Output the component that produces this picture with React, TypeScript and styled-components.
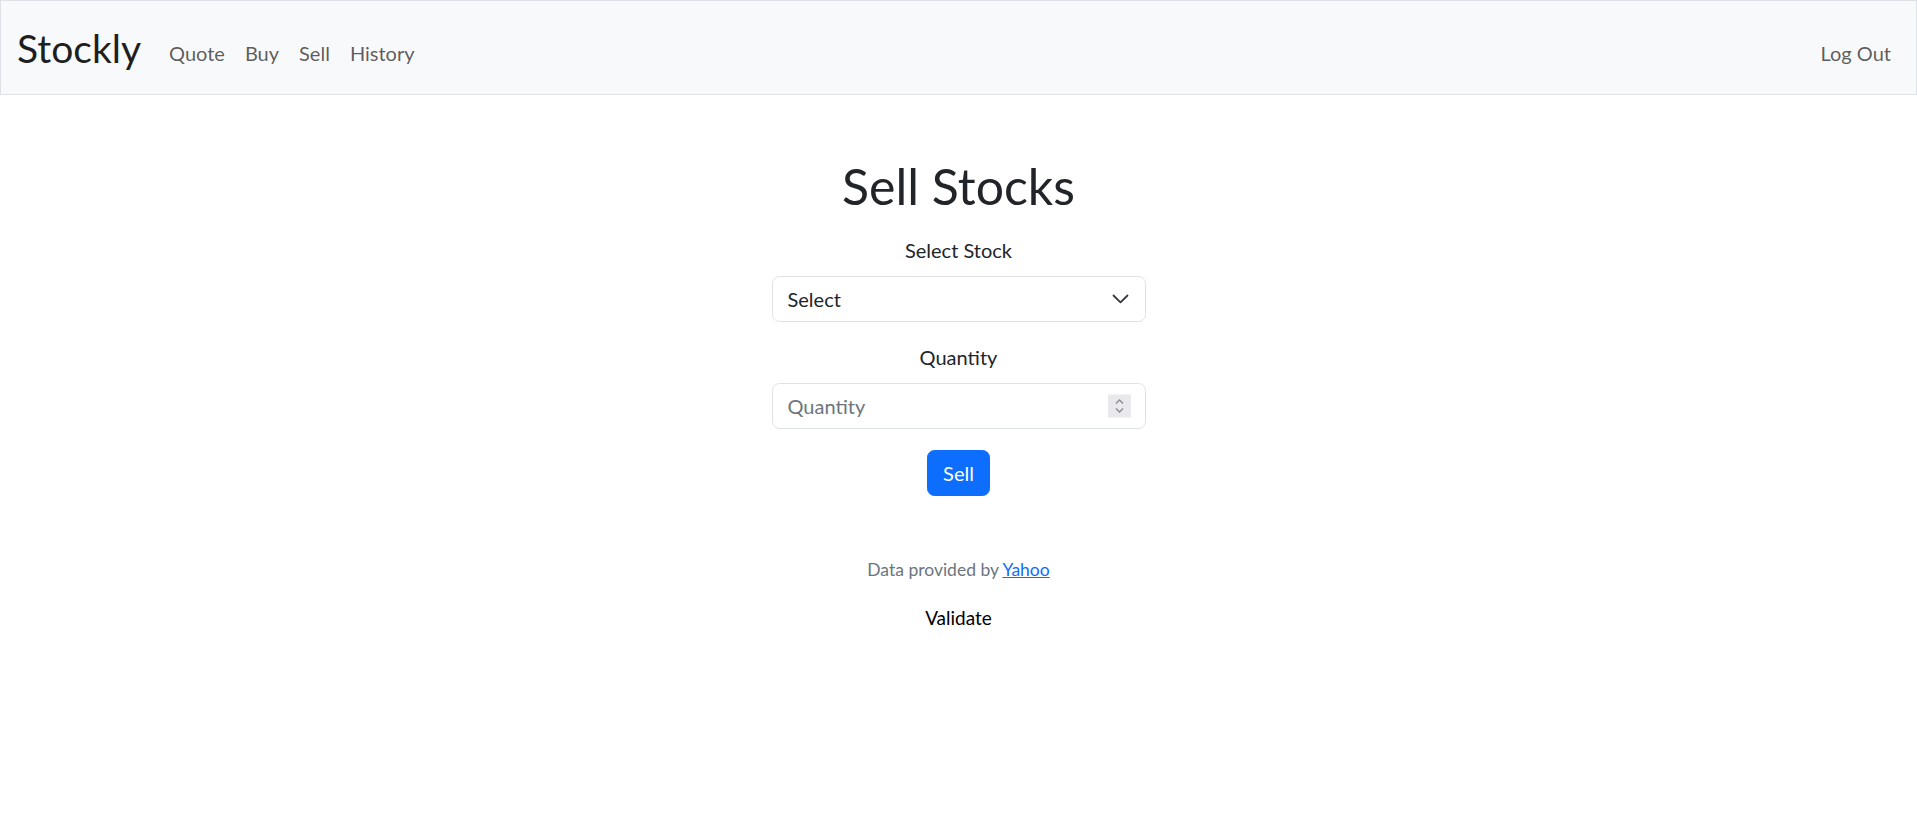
import React from "react";
import styled, { createGlobalStyle } from "styled-components";

const Global = createGlobalStyle`
  html, body { margin: 0; padding: 0; }
  body {
    font-family: "Lato", "Open Sans", sans-serif;
    font-size: 20px;
    line-height: 1.5;
    color: #212529;
    background: #fff;
  }
  * { box-sizing: border-box; }
`;

const Navbar = styled.nav`
  display: flex;
  align-items: center;
  height: 95px;
  padding: 0 15px 0 16px;
  background: #f8f9fa;
  border: 1px solid #dee2e6;
`;

const Brand = styled.a`
  font-size: 39px;
  line-height: 1.2;
  color: rgba(0, 0, 0, 0.9);
  text-decoration: none;
  margin-right: 18px;
  padding-top: 2px;
`;

const NavList = styled.div`
  display: flex;
  align-items: center;
  flex: 1;
  padding-top: 10px;
`;

const NavLink = styled.a`
  color: rgba(0, 0, 0, 0.65);
  text-decoration: none;
  padding: 0 10px;
`;

const Spacer = styled.div`
  flex: 1;
`;

const Main = styled.main`
  display: flex;
  flex-direction: column;
  align-items: center;
  text-align: center;
  padding-top: 61px;
`;

const Title = styled.h1`
  margin: 0 0 19px;
  font-size: 50px;
  font-weight: 400;
  line-height: 1.2;
`;

const Form = styled.form`
  display: flex;
  flex-direction: column;
  align-items: center;
  width: 374px;
`;

const Label = styled.label`
  display: block;
  margin-bottom: 11px;
`;

const Field = styled.div`
  position: relative;
  width: 100%;
  margin-bottom: 20px;
`;

const Box = styled.div<{ $placeholder?: boolean }>`
  width: 100%;
  height: 46px;
  padding: 0 15px;
  display: flex;
  align-items: center;
  border: 1px solid #dee2e6;
  border-radius: 7.5px;
  background: #fff;
  text-align: left;
  color: ${(p) => (p.$placeholder ? "#6c757d" : "#212529")};
`;

const Chevron = styled.svg`
  position: absolute;
  right: 17px;
  top: 50%;
  transform: translateY(-50%);
`;

const Spinner = styled.div`
  position: absolute;
  right: 15px;
  top: 50%;
  transform: translateY(-50%);
  width: 23px;
  height: 23px;
  background: #e9e9ed;
  display: flex;
  align-items: center;
  justify-content: center;
`;

const Button = styled.button`
  font-family: inherit;
  font-size: 20px;
  line-height: 1.5;
  color: #fff;
  background: #0d6efd;
  border: 1px solid #0d6efd;
  border-radius: 7.5px;
  padding: 7px 15px;
  margin-top: 1px;
`;

const Footer = styled.p`
  margin: 61px 0 0;
  font-size: 17.5px;
  color: #6c757d;
`;

const FooterLink = styled.a`
  color: #0d6efd;
  text-decoration: underline;
`;

const Validate = styled.div`
  margin-top: 21px;
  color: #000;
  font-size: 19px;
`;

export default function App() {
  return (
    <>
      <Global />
      <Navbar>
        <Brand href="#">Stockly</Brand>
        <NavList>
          <NavLink href="#">Quote</NavLink>
          <NavLink href="#">Buy</NavLink>
          <NavLink href="#">Sell</NavLink>
          <NavLink href="#">History</NavLink>
          <Spacer />
          <NavLink href="#">Log Out</NavLink>
        </NavList>
      </Navbar>
      <Main>
        <Title>Sell Stocks</Title>
        <Form onSubmit={(e) => e.preventDefault()}>
          <Label>Select Stock</Label>
          <Field>
            <Box>Select</Box>
            <Chevron width="17" height="10" viewBox="0 0 17 10">
              <path d="M1.5 1.5 L8.5 8.3 L15.5 1.5" fill="none" stroke="#343a40" strokeWidth="1.8" strokeLinecap="round" strokeLinejoin="round" />
            </Chevron>
          </Field>
          <Label>Quantity</Label>
          <Field>
            <Box $placeholder>Quantity</Box>
            <Spinner>
              <svg width="11" height="17" viewBox="0 0 11 17">
                <path d="M2 6 L5.5 2.5 L9 6" fill="none" stroke="#8a8a92" strokeWidth="1.4" />
                <path d="M2 11 L5.5 14.5 L9 11" fill="none" stroke="#8a8a92" strokeWidth="1.4" />
              </svg>
            </Spinner>
          </Field>
          <Button type="submit">Sell</Button>
        </Form>
        <Footer>
          Data provided by <FooterLink href="#">Yahoo</FooterLink>
        </Footer>
        <Validate>Validate</Validate>
      </Main>
    </>
  );
}
